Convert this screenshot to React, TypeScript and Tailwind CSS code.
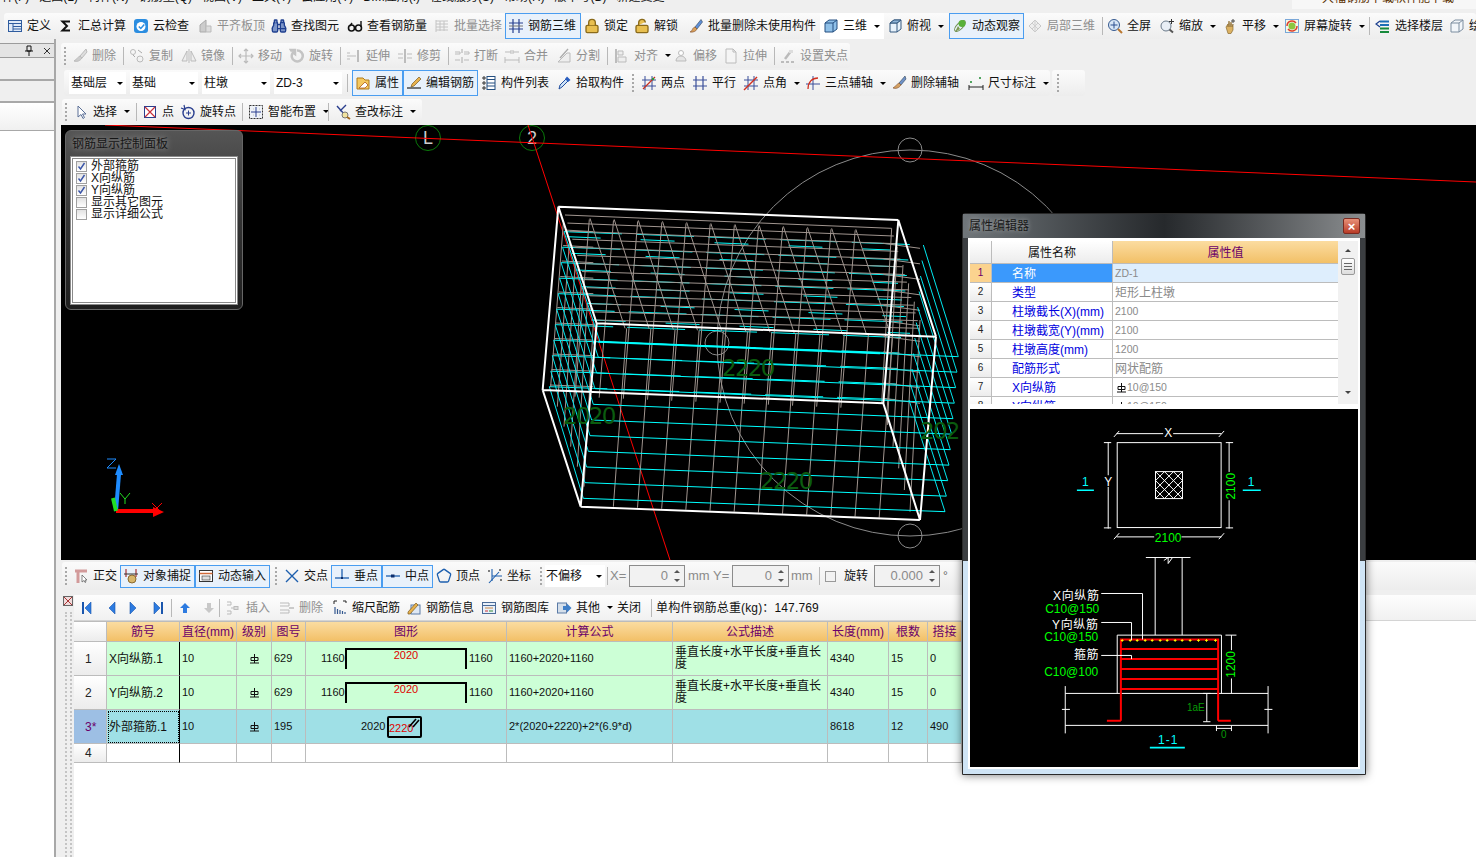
import type { ReactNode } from 'react';
import { Lock, LockOpen, Binoculars, Pentagon } from 'lucide-react';

const line = (d: string, c = '#888', w = 1) => <path d={d} fill="none" stroke={c} strokeWidth={w} />;

// toolbar pictures, all on a 16x16 box
const icons: Record<string, ReactNode> = {
  def: <><rect x="1.5" y="2.5" width="13" height="11" fill="#dfeaf8" stroke="#2f5c9f" />{line('M1.5 5.5h13M6 5.5v8M6 8.5h8.5M6 11h8.5', '#2f5c9f')}</>,
  sigma: line('M12 3.5H4.5L9 8l-4.5 4.5H12', '#111', 2),
  cloud: <><rect x="1" y="1" width="14" height="14" rx="3" fill="#2b8de0" /><circle cx="8" cy="8.5" r="4.5" fill="#fff" />{line('M5.8 8.5l2 2 3.5-4', '#2b8de0', 1.5)}</>,
  flat: <><path d="M3 14V7l6-5v12z" fill="#ccc" stroke="#aaa" /><path d="M9 14V8h5v6z" fill="#ddd" stroke="#bbb" /></>,
  glass: <><circle cx="4.5" cy="10" r="3" fill="none" stroke="#111" strokeWidth="1.6" /><circle cx="11.5" cy="10" r="3" fill="none" stroke="#111" strokeWidth="1.6" />{line('M7.5 10h1M14 9V3M3 8l2-3', '#111', 1.4)}</>,
  batch: <>{line('M2 2v12M2 3h12M2 6h12M2 9h12M2 12h12M6 3v10M10 3v10', '#c4c4c4')}</>,
  bars: <>{line('M1 5h14M1 11h14M5 1v14M11 1v14', '#27408f', 1.2)}{line('M1 8h14', '#777')}</>,
  brush: <><path d="M13 1.5L7 9l2 2 5.5-7z" fill="#5f8fd8" stroke="#345" strokeWidth=".6" /><path d="M7 9c-2 .5-2.5 2-3 3.5L2 14c3 .5 6-.5 7-3z" fill="#d9a05a" stroke="#7a4a2a" strokeWidth=".6" /></>,
  cube: <><path d="M2 5l4-3h8v9l-4 3H2z" fill="#8fc0e8" stroke="#244f80" /><path d="M2 5h8v9M10 5l4-3" fill="none" stroke="#244f80" /></>,
  cubeTop: <><path d="M3 5l4-3h7v9l-4 3H3z" fill="#e8f2fb" stroke="#35597f" /><path d="M3 5h7v9M10 5l4-3" fill="none" stroke="#35597f" /><path d="M3 5h7l4-3H7z" fill="#8fb5d8" stroke="#35597f" /></>,
  orbit: <><ellipse cx="8" cy="8" rx="7" ry="3" transform="rotate(-45 8 8)" fill="none" stroke="#6f8f4f" /><circle cx="10" cy="5.5" r="3.5" fill="#58b13a" /><path d="M6 8l-3 6 5-3z" fill="#7c9a50" /></>,
  part: <><path d="M2 8l6-6 6 6-6 6z" fill="#eee" stroke="#c8c8c8" />{line('M5 5l6 6M11 5l-6 6M8 2v12', '#cfcfcf')}</>,
  full: <><circle cx="7" cy="7" r="5.5" fill="#d8e6f6" stroke="#35598f" />{line('M7 3.5v7M3.5 7h7', '#2a4f8f')}{line('M11 11l4 4', '#b9772f', 2)}</>,
  zoom: <><circle cx="7" cy="8" r="5" fill="#e8eef5" stroke="#6a7a8a" />{line('M10.5 11.5l3.5 3', '#555', 2)}{line('M12.5 1v5M10 3.5h5', '#333')}</>,
  pan: <><path d="M4 9l2-3v3l1-6 1 6 1-5 1 5 1-3v6l-2 3.5H6z" fill="#dcb263" stroke="#8a6a30" strokeWidth=".7" />{line('M11 1v4M9 3h4', '#444')}</>,
  spin: <><rect x="1.5" y="1.5" width="13" height="13" fill="#f4f9e8" stroke="#7aa7d8" /><circle cx="8" cy="8" r="3.5" fill="#8cc63f" />{line('M3 8a5 5 0 0 1 9-3M13 8a5 5 0 0 1-9 3', '#e0402a', 1.5)}</>,
  floor: <>{line('M5 3.5h9M5 7h9', '#1b6fb5', 2)}{line('M5 10.5h9M5 14h9', '#178a3c', 2)}{line('M5 3L1 6l4 3', '#1b3f8f', 1.2)}</>,
  boxLine: <><path d="M2 5l4-3h8v9l-4 3H2zM2 5h8v9M10 5l4-3" fill="#f2f6fa" stroke="#7d8ea0" /></>,
  erase: <><path d="M14 1L8 8l2 2 5-6z" fill="#ddd" stroke="#bbb" /><path d="M8 8c-2 1-3 3-6 5 3 1 6 0 8-3z" fill="#ccc" stroke="#bbb" /></>,
  copy: <><circle cx="4" cy="4" r="2.5" fill="none" stroke="#bbb" /><circle cx="11" cy="11" r="3" fill="none" stroke="#bbb" />{line('M4 7l2 2M9 2l4 3', '#aaa')}</>,
  mirror: <>{line('M8 1v14', '#bbb')}<path d="M6 3v10H1zM10 3v10h5z" fill="#eee" stroke="#bbb" /></>,
  move: line('M8 1v14M1 8h14M6 3l2-2 2 2M6 13l2 2 2-2M3 6L1 8l2 2M13 6l2 2-2 2', '#bbb', 1.2),
  rotate: <path d="M8 2.5a5.5 5.5 0 1 1-4 2L6 6V2H2l1 1.5" fill="none" stroke="#c4c4c4" strokeWidth="2.5" />,
  extend: <>{line('M1 5h3M1 8h9M1 11h3', '#bbb')}{line('M12 2v12', '#aaa', 1.5)}</>,
  trim: <>{line('M1 6h5M10 6h5M1 10h5M10 10h5', '#bbb')}{line('M8 1v14', '#aaa', 1.5)}</>,
  cut: <>{line('M1 4h5v2H1M10 4h5v2h-5M1 12h5M10 12h5', '#bbb')}{line('M8 1v4M8 9v6', '#aaa')}</>,
  merge: line('M1 4h6M9 4h6M1 12h14M7 2v4M9 2v4M1 9v6M15 9v6', '#bbb'),
  split: <><path d="M2 14l9-9h3v9z" fill="#eee" stroke="#bbb" />{line('M12 1L4 10', '#aaa', 1.3)}</>,
  align: <>{line('M2 1v14', '#aaa', 1.5)}<path d="M4 3h5v4H4zM4 9h8v5H4z" fill="#eee" stroke="#bbb" /></>,
  offset: <><path d="M3 13a5 5 0 1 1 10 0z" fill="#e5e5e5" stroke="#bbb" /><circle cx="8" cy="5" r="2.5" fill="#fff" stroke="#bbb" /></>,
  stretch: <><path d="M3 1h7l3 3v11H3z" fill="#f5f5f5" stroke="#bbb" />{line('M10 1v3h3', '#bbb')}</>,
  grip: <>{line('M11 3l-6 8', '#bbb', 2.5)}{line('M1 14h3M6 14h3M11 14h3', '#aaa', 1.5)}<rect x="9" y="2" width="4" height="3" fill="#ddd" /></>,
  attr: <><path d="M2 3h6l2 2h4v9H2z" fill="#f4c85f" stroke="#b07a1a" /><path d="M4 13l6-6 3 3-3 3z" fill="#fff" stroke="#b05a1a" strokeWidth=".8" /></>,
  edit: <>{line('M1 13h14', '#222', 1.2)}<path d="M13 2L6 9l-1 3 3-1 7-7z" fill="#e8b24d" stroke="#7a5a20" strokeWidth=".7" /></>,
  list: <>{line('M2 2h2v2H2zM2 7h2v2H2zM2 12h2v2H2z', '#333')}<rect x="6" y="1.5" width="8" height="13" fill="#fff" stroke="#244f80" />{line('M6 4.5h8M6 8h8M6 11h8', '#244f80')}</>,
  pick: <><path d="M3 14l1-4 6-6 2 2-6 6z" fill="#cfe3f7" stroke="#234f9f" /><path d="M9 4l2-2.5 3.5 3.5L12 7z" fill="#2a5ec0" /></>,
  twoPt: <>{line('M4 1v14M11 1v14M1 5h14M1 11h14', '#3a4f9a')}{line('M2 14L14 2', '#c83020', 1.2)}<circle cx="12" cy="4" r="1.2" fill="#2a9a3a" /></>,
  para: line('M4 1v14M11 1v14M1 5h14M1 11h14', '#3a4f9a', 1.2),
  angle: <>{line('M5 1v14M11 1v14M1 5h14M1 11h14', '#3a4f9a')}{line('M1 15L14 2', '#d03020', 1.4)}</>,
  arc: <>{line('M8 1v14M1 9h14', '#3a4f9a')}{line('M3 14C3 7 7 3 13 3', '#d03020', 1.3)}</>,
  delAxis: <><path d="M14 1L8 8l2 2 5-6z" fill="#6f92c8" stroke="#345" strokeWidth=".6" /><path d="M8 8c-2 1-3 3-6 5 3 1 6 0 8-3z" fill="#d4a060" stroke="#7a4a2a" strokeWidth=".6" /></>,
  dim: <>{line('M1 12h14M1 10v5M15 10v5', '#222')}<circle cx="3" cy="7" r="1" fill="#1d8a2f" /><circle cx="12" cy="3" r="1" fill="#1d8a2f" /></>,
  pointer: <path d="M5 2v11l3-2.5 2 4 1.5-1-2-3.5h3.5z" fill="#fff" stroke="#5a6f96" />,
  ptBox: <><rect x="2.5" y="2.5" width="11" height="11" fill="#fff" stroke="#2a3f8f" />{line('M3 3l10 10M13 3L3 13', '#c8303a', 1.2)}</>,
  ptRot: <><circle cx="8.5" cy="9" r="5.5" fill="none" stroke="#2a3f8f" strokeWidth="1.4" />{line('M8.5 6.5v5M6 9h5', '#2a3f8f')}{line('M4 1l1 4.5L1 4', '#2a3f8f', 1.2)}</>,
  smart: <><rect x="1.5" y="1.5" width="13" height="13" fill="#eef2f7" stroke="#333" strokeDasharray="2 1" />{line('M5 5h.1M11 5h.1M5 11h.1M11 11h.1', '#111', 2)}{line('M8 3v10M3 8h10', '#2a3f8f', 1)}</>,
  note: <>{line('M2 2l8 9M11 1L5 7', '#2a3f8f', 1.4)}<circle cx="10" cy="11" r="3" fill="#f1e3a0" stroke="#777" />{line('M12 13l3 2', '#a36a1f', 2)}</>,
  ortho: <>{line('M2 3h12', '#d29a9a', 3)}{line('M5 3v12', '#d29a9a', 3)}<path d="M9 7v7l2-1.5 1 2 1-.5-1-2h2z" fill="#fff" stroke="#555" strokeWidth=".7" /></>,
  snap: <>{line('M3 1v8M13 1v8', '#a33', 1.2)}<circle cx="9" cy="11" r="4" fill="#d8b66a" stroke="#8a6a30" />{line('M1 6h14', '#333')}</>,
  dynIn: <><rect x="1.5" y="2.5" width="13" height="11" fill="#fff" stroke="#333" />{line('M1.5 5.5h13', '#d06a3a', 1.5)}<rect x="4" y="8" width="8" height="4" fill="#ddd" stroke="#333" strokeWidth=".6" /></>,
  cross: line('M2 2l12 12M14 2L2 14', '#1d5fae', 1.4),
  perp: <>{line('M8 1v8', '#1d5fae', 1.3)}{line('M1 10h14', '#1d5fae', 1.3)}<rect x="7" y="9" width="2" height="2" fill="#0d2f6e" /></>,
  mid: <>{line('M1 8h14', '#1d5fae', 1.3)}<rect x="6" y="6.5" width="3.5" height="3" fill="#0d2f6e" /></>,
  coord: <>{line('M5 1v12M5 8h10', '#1d5fae', 1.1)}{line('M2 15l10-11', '#1d5fae', 1.1)}<circle cx="2" cy="3" r="1" fill="#555" /><circle cx="13" cy="2" r="1" fill="#555" /><circle cx="14" cy="12" r="1" fill="#555" /></>,
  ins: <>{line('M1 2h4v3H1M1 11h4v3H1M5 8h3', '#bbb')}<rect x="8" y="6.5" width="4" height="3" fill="#ddd" stroke="#bbb" /></>,
  del: <>{line('M1 3h9v3H1M1 10h9v3H1', '#bbb')}{line('M10 8h5', '#bbb', 1.5)}</>,
  scale: <>{line('M2 1h3M2 1v3M11 1h3M14 1v2', '#222')}{line('M3 14v-7M5.5 14v-5M8 14v-4M10.5 14v-3M13 14v-2', '#35598f', 1.2)}</>,
  info: <><rect x="5" y="5" width="9" height="9" fill="#dfe8f4" stroke="#5a7aa6" /><path d="M2 12l8-9 2 2-8 9H2z" fill="#e8b24d" stroke="#7a5a20" strokeWidth=".7" /></>,
  lib: <><rect x="1.5" y="2.5" width="13" height="11" fill="#e8f0fa" stroke="#4a6a96" />{line('M1.5 5.5h13', '#4a6a96')}{line('M4 8h8', '#c84')}{line('M4 11h3', '#c33')}{line('M8 11h4', '#383')}</>,
  other: <><rect x="1.5" y="3" width="9" height="10" fill="#d5dfea" stroke="#5a7aa6" /><path d="M7 6h4V3.5L15.5 8 11 12.5V10H7z" fill="#3f7fc8" /></>,
};

const Pic = ({ n, size = 16 }: { n: string; size?: number }) => (
  <svg width={size} height={size} viewBox="0 0 16 16" className="shrink-0">{icons[n]}</svg>
);

const Caret = ({ cls = 'ml-[7px]' }: { cls?: string }) => (
  <span className={`${cls} w-0 h-0 shrink-0 border-x-[3px] border-x-transparent border-t-[3px] border-t-black`} />
);

const Grip = ({ w = 'w-[8px]' }: { w?: string }) => (
  <div className={`${w} h-full shrink-0 flex items-center justify-center`}>
    <div className="h-[18px] border-l-2 border-dotted border-[#a8a8a8]" />
  </div>
);

const Sep = ({ w = 'w-[5px]' }: { w?: string }) => (
  <div className={`${w} h-full shrink-0 flex items-center justify-center`}>
    <div className="h-[18px] w-px bg-[#b8b8b8]" />
  </div>
);

type ToolProps = { w: string; i?: ReactNode; n?: string; t?: string; sel?: boolean; off?: boolean; arrow?: boolean; white?: boolean };

function Tool({ w, i, n, t, sel, off, arrow, white }: ToolProps) {
  return (
    <div
      className={`${w} h-full shrink-0 flex items-center pl-[2px] border whitespace-nowrap ${
        sel ? 'border-[#4a9df0] bg-[#e8f1fb]' : white ? 'border-transparent bg-white' : 'border-transparent'
      } ${off ? 'text-[#8f8f8f]' : 'text-[#111]'}`}
    >
      {n ? <Pic n={n} /> : i}
      {t && <span className="ml-[4px]">{t}</span>}
      {arrow && <Caret />}
    </div>
  );
}

function Combo({ w, t }: { w: string; t: string }) {
  return (
    <div className={`${w} h-[22px] shrink-0 bg-white flex items-center pl-[2px] text-[#111]`}>
      <span className="flex-1">{t}</span>
      <Caret cls="mr-[1px]" />
      <span className="w-[2px]" />
    </div>
  );
}

function Spin({ w, v }: { w: string; v: string }) {
  return (
    <div className={`${w} h-[22px] shrink-0 border border-[#8c8c8c] bg-[#f2f2f2] flex items-center justify-end text-[#8a8a8a] text-[13px]`}>
      <span className="mr-[2px]">{v}</span>
      <div className="w-[14px] h-full flex flex-col items-center justify-center gap-[6px]">
        <span className="w-0 h-0 border-x-[3px] border-x-transparent border-b-[3px] border-b-[#555]" />
        <span className="w-0 h-0 border-x-[3px] border-x-transparent border-t-[3px] border-t-[#555]" />
      </div>
    </div>
  );
}

const Band = ({ cls, children }: { cls: string; children: ReactNode }) => (
  <div className={`${cls} flex rounded-[3px] bg-linear-to-b from-[#fbfbfb] to-[#ededed]`}>{children}</div>
);

// rebar grade mark used in the tables
const Grade = () => (
  <svg width="9" height="10" viewBox="0 0 9 10" className="shrink-0">
    <path d="M1 3.5h7v3H1zM4.5 0v9M0 9h9" fill="none" stroke="#111" strokeWidth="1" />
  </svg>
);

// ---- 3D view ----
const zx = (x: number) => 530 + x / 3;
const zy = (y: number) => 190 + y / 3;
const seg = (a: number, b: number, c: number, d: number) => `M${zx(a)} ${zy(b)}L${zx(c)} ${zy(d)}`;
const range = (n: number) => Array.from({ length: n }, (_, k) => k);

const greyMesh = [
  ...range(14).map((j) => seg(105 + (95 * j) / 13, 75 + (315 * j) / 13, 1085 + (85 * j) / 13, 115 + (300 * j) / 13)),
  ...range(12).map((k) => seg(180 + 72.5 * k, 85 + 3 * k, 285 + 72.5 * k, 415 + 2 * k)),
  ...range(12).map((k) => seg(178 + 72.5 * k, 88 + 3 * k, 135 + 72.5 * k, 620 + 3 * k)),
  ...range(12).map((k) => seg(290 + 72.5 * k, 415 + 2 * k, 250 + 72.5 * k, 950 + 3 * k)),
  ...range(6).map((k) => seg(100 + 18 * k, 100 + 60 * k, 62 + 20 * k, 590 + 60 * k)),
  ...range(6).map((k) => seg(1085 + 17 * k, 115 + 55 * k, 1055 + 17 * k, 640 + 65 * k)),
  ...range(11).map((k) => seg(60 + 4.4 * k, 585 - 46.5 * k, 190, 590 - 46.5 * k)),
  ...range(11).map((k) => seg(1060, 625 - 46.5 * k, 1170, 640 - 46.5 * k)),
].join('');

const cyanFront = range(11).map((k) => seg(160 + 5 * k, 925 - 47 * k, 1245 + 4 * k, 965 - 46.5 * k)).join('');
const cyanBack = range(11).map((k) => seg(58 + 4.4 * k, 590 - 46.5 * k, 1137 + 4.3 * k, 630 - 46.5 * k)).join('');
const cyanTop = range(6).map((k) => seg(110 + 15 * k, 140 + 50 * k, 1080 + 12 * k, 180 + 50 * k)).join('');
const cyanSide = [
  ...range(11).map((k) => seg(1137 + 4.3 * k, 630 - 46.5 * k, 1245 + 4 * k, 965 - 46.5 * k)),
  ...range(11).map((k) => seg(58 + 4.4 * k, 590 - 46.5 * k, 160 + 5 * k, 925 - 47 * k)),
].join('');

function Bubble({ x, y, t }: { x: number; y: number; t: string }) {
  return (
    <g>
      <circle cx={x} cy={y} r="12.5" fill="none" stroke="#0a7a0a" />
      <text x={x} y={y + 6} textAnchor="middle" fontSize="18" fill="#ccc">{t}</text>
    </g>
  );
}

function View3D() {
  return (
    <svg viewBox="61 125 1415 435" width="1415" height="435" className="block">
      <rect x="61" y="125" width="1415" height="435" fill="#000" />
      <circle cx="910" cy="343" r="193" fill="none" stroke="#8a8a8a" />
      <circle cx="910" cy="150" r="12" fill="none" stroke="#8a8a8a" />
      <circle cx="910" cy="536" r="12" fill="none" stroke="#8a8a8a" />
      <circle cx="717" cy="343" r="12" fill="none" stroke="#8a8a8a" />
      <Bubble x={428} y={138} t="L" />
      <Bubble x={532} y={138} t="2" />
      {line('M105 125L1476 182M528 125L670 560', '#ff0000')}
      <path d={cyanBack} fill="none" stroke="#00ffff" strokeDasharray="58 14" />
      <path d={cyanTop} fill="none" stroke="#00ffff" strokeDasharray="34 40" />
      <path d={greyMesh} fill="none" stroke="#a0958f" />
      <path d={cyanSide} fill="none" stroke="#00e8f0" />
      <path d={cyanFront} fill="none" stroke="#00ffff" />
      {line(seg(205, 455, 1050, 490), '#00ffff', 2)}
      <path
        d={`${seg(85, 50, 1105, 90)}${seg(1105, 90, 1218, 440)}${seg(1218, 440, 200, 400)}${seg(200, 400, 85, 50)}${seg(38, 600, 1060, 640)}${seg(1060, 640, 1170, 990)}${seg(1170, 990, 152, 950)}${seg(152, 950, 38, 600)}${seg(85, 50, 38, 600)}${seg(1105, 90, 1060, 640)}${seg(200, 400, 152, 950)}${seg(1218, 440, 1170, 990)}`}
        fill="none"
        stroke="#fff"
        strokeWidth="2"
      />
      <g fill="#0b5c0f" fontSize="23" letterSpacing="-1.7" fontFamily="'DejaVu Sans', sans-serif">
        <text x="722" y="376">2220</text>
        <text x="563" y="424">2020</text>
        <text x="760" y="489">2220</text>
        <text x="920" y="439">202</text>
      </g>
      {/* axis gizmo */}
      {line('M116 511L119 474', '#1e8cff', 4)}
      <path d="M119 464l4 11h-8z" fill="#1e8cff" />
      {line('M116 511H154', '#ff0000', 4)}
      <path d="M164 512l-11 5v-10z" fill="#ff0000" />
      {line('M116 511L113 498', '#22dd22', 4)}
      {line('M107 459h9l-9 9h9', '#1e8cff')}
      {line('M120 493l5 6 5-6M125 499v5', '#22dd22')}
      {line('M152 503l10 10M162 503l-10 10', '#ff0000')}
    </svg>
  );
}

// ---- preview in the property dialog, drawn in 3x units ----
function Preview() {
  const w = '#fff';
  const ticks = 'M462 95l16-18M777 95l16-18M462 402l16-18M777 402l16-18M432 112h22M432 368h22M798 112h22M798 368h22';
  return (
    <svg viewBox="30 12 1165 1073" width="388" height="358" className="block bg-black">
      {line('M470 85H610M640 85H785M470 395H583M665 395H785M445 110V210M445 245V370M808 110V200M808 285V370', w, 3)}
      {line(ticks, w, 3)}
      <rect x="472" y="112" width="312" height="255" fill="none" stroke={w} strokeWidth="3" />
      <rect x="587" y="199" width="81" height="81" fill="none" stroke={w} strokeWidth="3" />
      {line('M587 226l27-27M587 253l54-54M587 280l81-81M614 280l54-54M641 280l27-27M587 253l27 27M587 226l54 54M587 199l81 81M614 199l54 54M641 199l27 27', w, 3)}
      {line('M351 255h51M849 255h54M570 1028h105', '#00ffff', 5)}
      {line('M586 457V690M667 457V690M558 457H692M612 466l13-9v18l13-18', w, 3)}
      {line('M472 865V690H785V865M316 865H925M316 961H925M316 843V985M925 843V985M306 913h24M914 913h24', w, 3)}
      {line('M483 947V703H775V947M483 732H775M483 762H775M483 792H775M483 822H775M483 852H775M441 947H483M775 947H813', '#ff0000', 6)}
      {line('M487 702v8M511 702v8M532 702v8M556 702v8M577 702v8M601 702v8M622 702v8M646 702v8M667 702v8M691 702v8M716 702v8M740 702v8M767 702v8M483 706h8M507 706h8M528 706h8M552 706h8M573 706h8M597 706h8M618 706h8M642 706h8M663 706h8M687 706h8M712 706h8M736 706h8M763 706h8', '#ffff00', 3)}
      {line('M424 565H548V703M424 652H515V705M424 751H515V762', w, 3)}
      {line('M815 690V735M815 820V865M797 690H830M741 865V950M730 865H752M730 950H752M770 970H815M770 962V978M815 962V978', w, 3)}
      <g fontSize="36" textAnchor="middle" fontFamily="'Liberation Sans', 'Noto Sans CJK SC', sans-serif">
        <text x="625" y="95" fill={w}>X</text>
        <text x="445" y="243" fill={w}>Y</text>
        <text x="376" y="243" fill="#00ffff">1</text>
        <text x="874" y="243" fill="#00ffff">1</text>
        <text x="625" y="411" fill="#00ff00">2100</text>
        <text transform="translate(827 243) rotate(-90)" fill="#00ff00">2100</text>
        <text transform="translate(827 778) rotate(-90)" fill="#00ff00">1200</text>
        <text x="625" y="1016" fill="#00ffff" letterSpacing="3">1-1</text>
        <text x="792" y="999" fill="#079a07" fontSize="30">0</text>
        <text x="708" y="918" fill="#079a07" fontSize="30">1aE</text>
      </g>
      <g fontSize="36" textAnchor="end" fontFamily="'Liberation Sans', 'Noto Sans CJK SC', sans-serif">
        <text x="419" y="584" fill={w} letterSpacing="2">X向纵筋</text>
        <text x="418" y="623" fill="#00ff00">C10@150</text>
        <text x="416" y="671" fill={w} letterSpacing="2">Y向纵筋</text>
        <text x="415" y="707" fill="#00ff00">C10@150</text>
        <text x="418" y="761" fill={w} letterSpacing="2">箍筋</text>
        <text x="415" y="812" fill="#00ff00">C10@100</text>
      </g>
    </svg>
  );
}

const propRows: [string, string, ReactNode][] = [
  ['1', '名称', 'ZD-1'],
  ['2', '类型', '矩形上柱墩'],
  ['3', '柱墩截长(X)(mm)', '2100'],
  ['4', '柱墩截宽(Y)(mm)', '2100'],
  ['5', '柱墩高度(mm)', '1200'],
  ['6', '配筋形式', '网状配筋'],
  ['7', 'X向纵筋', <span className="flex items-center gap-[1px] pl-[2px]"><Grade />10@150</span>],
  ['8', 'Y向纵筋', <span className="flex items-center gap-[1px] pl-[2px]"><Grade />10@150</span>],
];

function PropEditor() {
  return (
    <div className="absolute left-[962px] top-[213px] w-[404px] h-[562px] flex flex-col border border-[#2a2a2a] rounded-t-[3px] px-[5px] shadow-[0_0_10px_rgba(0,0,0,0.55)] bg-linear-to-b from-[#3b3e41] from-[62%] to-[#cfe4f5] to-[62%]">
      <div className="h-[24px] shrink-0 -mx-[5px] pl-[6px] pr-[5px] flex items-center justify-between bg-linear-to-r from-[#70767a] via-[#26292c] to-[#8b8e90] text-[#1a1a1a] text-[12px]">
        <span className="[text-shadow:0_0_5px_rgba(255,255,255,0.45)]">属性编辑器</span>
        <div className="w-[17px] h-[16px] rounded-[2px] border border-[#7a2a20] bg-linear-to-b from-[#e89078] to-[#b83a25] flex items-center justify-center text-white text-[13px] font-bold leading-none">×</div>
      </div>
      <div className="flex-1 border-2 border-white bg-white pt-px mb-[5px] flex flex-col">
        <div className="h-[163px] flex overflow-hidden shrink-0 border-x-0">
          <div className="w-[368px]">
            <div className="h-[23px] flex text-[12px] border-b border-[#bcbcbc] pt-0">
              <div className="w-[22px] border-r border-[#bcbcbc] bg-linear-to-b from-white to-[#ececec]" />
              <div className="w-[121px] border-r border-[#bcbcbc] bg-linear-to-b from-white to-[#ececec] flex items-center justify-center pt-px text-[#111]">属性名称</div>
              <div className="flex-1 bg-linear-to-b from-[#fbdca0] to-[#f2c066] flex items-center justify-center pt-px text-[#6a006a]">属性值</div>
            </div>
            {propRows.map(([no, name, val], k) => (
              <div key={no} className="h-[19px] flex border-b border-[#bcbcbc] text-[12px] leading-none">
                <div className={`w-[22px] border-r border-[#bcbcbc] flex items-center justify-center text-[10px] ${k === 0 ? 'bg-[#fbd38f] text-[#6a006a]' : 'bg-linear-to-b from-white to-[#ececec] text-[#222]'}`}>{no}</div>
                <div className={`w-[121px] border-r border-[#bcbcbc] flex items-center pl-[20px] pt-px whitespace-nowrap text-[#0000e0] ${k === 0 ? 'bg-[#3b99fc] text-white' : 'bg-white'}`}>{name}</div>
                <div className={`flex-1 flex items-center pl-[2px] pt-px text-[#8a8a8a] ${/^[\dZ]/.test(String(val)) || k > 5 ? 'text-[10.5px]' : ''} ${k === 0 ? 'bg-[#deeefd]' : 'bg-white'}`}>{val}</div>
              </div>
            ))}
          </div>
          <div className="w-[20px] bg-[#f1f1f1] flex flex-col items-center pt-[8px]">
            <span className="w-0 h-0 border-x-[3px] border-x-transparent border-b-[3px] border-b-[#444]" />
            <div className="mt-[6px] w-[14px] h-[17px] border border-[#999] rounded-[2px] bg-linear-to-b from-white to-[#ddd] flex flex-col items-center justify-center gap-[2px]">
              <span className="w-[8px] h-px bg-[#666]" />
              <span className="w-[8px] h-px bg-[#666]" />
              <span className="w-[8px] h-px bg-[#666]" />
            </div>
            <span className="mt-[116px] w-0 h-0 border-x-[3px] border-x-transparent border-t-[3px] border-t-[#444]" />
          </div>
        </div>
        <div className="mt-[5px]">
          <Preview />
        </div>
      </div>
    </div>
  );
}

function ControlPanel() {
  const rows: [string, boolean][] = [['外部箍筋', true], ['X向纵筋', true], ['Y向纵筋', true], ['显示其它图元', false], ['显示详细公式', false]];
  return (
    <div className="absolute left-[65px] top-[130px] w-[178px] h-[180px] rounded-[6px] border border-[#666] bg-linear-to-b from-[#555] via-[#333] to-[#1f1f1f] px-[4px] flex flex-col">
      <div className="h-[25px] shrink-0 pl-[2px] flex items-center text-[12px] text-[#161616] [text-shadow:0_0_6px_rgba(255,255,255,0.5)]">钢筋显示控制面板</div>
      <div className="h-[149px] border-[3px] border-double border-[#8a8a8a] bg-white pl-[3px] pt-px">
        {rows.map(([t, on]) => (
          <div key={t} className="h-[12px] flex items-center gap-[4px] text-[12px] leading-none text-[#111]">
            <div className="w-[11px] h-[11px] border border-[#a0a0a0] bg-linear-to-b from-[#e2e2e2] to-white flex items-center justify-center">
              {on && (
                <svg width="9" height="9" viewBox="0 0 9 9">
                  <path d="M1.5 4.5l2 2.5 4-6" fill="none" stroke="#3a55a8" strokeWidth="1.4" />
                </svg>
              )}
            </div>
            {t}
          </div>
        ))}
      </div>
    </div>
  );
}

// ---- steel table ----
const cols = 'grid grid-cols-[33px_73px_57px_35px_34px_201px_166px_155px_61px_39px_34px]';
const cell = 'border-r border-b border-[#bcbcbc] flex items-center';
const heads = ['', '筋号', '直径(mm)', '级别', '图号', '图形', '计算公式', '公式描述', '长度(mm)', '根数', '搭接'];

const Bent = ({ n }: { n: string }) => (
  <div className="flex items-center pl-[15px] text-[11px] h-full">
    <span className="w-[24px]">{n}</span>
    <div className="h-[21px] w-[122px] border-t-2 border-x-2 border-black text-center text-[#e00000] leading-[11px] -mt-[1px]">2020</div>
    <span className="ml-[2px]">{n}</span>
  </div>
);

const Stirrup = () => (
  <div className="flex items-center pl-[55px] text-[11px] h-full">
    <span className="w-[26px]">2020</span>
    <div className="relative w-[35px] h-[22px] border-2 border-black rounded-[2px] text-[#e00000] pt-[5px] leading-none whitespace-nowrap">
      2220
      <svg width="12" height="10" viewBox="0 0 12 10" className="absolute right-0 top-0">
        <path d="M1 9l7-8M5 9l6-7" fill="none" stroke="#000" strokeWidth="1.6" />
      </svg>
    </div>
  </div>
);

type Row = { no: string; name: string; shape: ReactNode; formula: string; desc: string; len: string; count: string; lap: string; grid: string; h: string; head: string };

const rows: Row[] = [
  { no: '1', name: 'X向纵筋.1', shape: <Bent n="1160" />, formula: '1160+2020+1160', desc: '垂直长度+水平长度+垂直长度', len: '4340', count: '15', lap: '0', grid: 'bg-[#ccffd6]', h: 'h-[34px]', head: 'bg-linear-to-b from-white to-[#ececec] text-[#222]' },
  { no: '2', name: 'Y向纵筋.2', shape: <Bent n="1160" />, formula: '1160+2020+1160', desc: '垂直长度+水平长度+垂直长度', len: '4340', count: '15', lap: '0', grid: 'bg-[#ccffd6]', h: 'h-[34px]', head: 'bg-linear-to-b from-white to-[#ececec] text-[#222]' },
  { no: '3*', name: '外部箍筋.1', shape: <Stirrup />, formula: '2*(2020+2220)+2*(6.9*d)', desc: '', len: '8618', count: '12', lap: '490', grid: 'bg-[#9fe0e6]', h: 'h-[34px]', head: 'bg-[#9dbfe4] text-[#6a006a]' },
];

function SteelTable() {
  return (
    <div className="w-[889px] text-[12px] text-[#111] border-t border-[#bcbcbc]">
      <div className={`${cols} h-[20px] text-[#6a006a]`}>
        {heads.map((t, k) => (
          <div key={k} className={`${cell} justify-center whitespace-nowrap ${k === 0 ? 'bg-linear-to-b from-white to-[#ececec]' : 'bg-linear-to-b from-[#fbdca0] to-[#f2c066]'}`}>{t}</div>
        ))}
      </div>
      {rows.map((r) => (
        <div key={r.no} className={`${cols} ${r.h} ${r.grid}`}>
          <div className={`${cell} pl-[11px] ${r.head}`}>{r.no}</div>
          <div className={`${cell} pl-[2px] border-r-black whitespace-nowrap ${r.no === '3*' ? 'outline-1 -outline-offset-2 outline-dotted outline-black' : ''}`}>{r.name}</div>
          <div className={`${cell} pl-[2px] text-[11px]`}>10</div>
          <div className={`${cell} justify-center`}><Grade /></div>
          <div className={`${cell} pl-[2px] text-[11px]`}>{r.no === '3*' ? '195' : '629'}</div>
          <div className="border-r border-b border-[#bcbcbc]">{r.shape}</div>
          <div className={`${cell} pl-[2px] text-[11px] whitespace-nowrap`}>{r.formula}</div>
          <div className="border-r border-b border-[#bcbcbc] px-[2px] pt-[5px] leading-[11.5px] break-all">{r.desc}</div>
          <div className={`${cell} pl-[2px] text-[11px]`}>{r.len}</div>
          <div className={`${cell} pl-[2px] text-[11px]`}>{r.count}</div>
          <div className={`${cell} pl-[2px] text-[11px]`}>{r.lap}</div>
        </div>
      ))}
      <div className={`${cols} h-[19px] bg-white`}>
        {heads.map((_, k) => (
          <div key={k} className={`${cell} ${k === 0 ? 'pl-[11px] bg-linear-to-b from-white to-[#ececec] text-[#222]' : ''} ${k === 1 ? 'border-r-black' : ''}`}>{k === 0 ? '4' : ''}</div>
        ))}
      </div>
    </div>
  );
}

const NavTri = ({ dir, bar }: { dir: 'l' | 'r'; bar?: boolean }) => (
  <svg width="12" height="14" viewBox="0 0 12 14" className="shrink-0">
    {dir === 'l' ? <path d="M10 1v12L4 7z" fill="#2d7be0" stroke="#1a56ad" strokeWidth=".6" /> : <path d="M2 1v12l6-6z" fill="#2d7be0" stroke="#1a56ad" strokeWidth=".6" />}
    {bar && (dir === 'l' ? <rect x="1" y="1" width="2" height="12" fill="#1a56ad" /> : <rect x="9" y="1" width="2" height="12" fill="#1a56ad" />)}
  </svg>
);

const UpDown = ({ up, off }: { up?: boolean; off?: boolean }) => (
  <svg width="12" height="12" viewBox="0 0 12 12" className="shrink-0">
    <path d={up ? 'M6 1l5 5H8v5H4V6H1z' : 'M6 11l5-5H8V1H4v5H1z'} fill={off ? '#c8c8c8' : '#2d7be0'} />
  </svg>
);

export default function App() {
  return (
    <div className="relative w-[1476px] h-[857px] overflow-hidden bg-[#efefef] font-['Liberation_Sans','Noto_Sans_CJK_SC',sans-serif] text-[12px]">
      {/* clipped menu bar */}
      <div className="h-[13px] overflow-hidden flex justify-between">
        <div className="-mt-[9px] pl-[2px] whitespace-nowrap text-[#111] leading-[12px]">
          件(F)&nbsp;&nbsp;&nbsp;选图(L)&nbsp;&nbsp;&nbsp;构件(N)&nbsp;&nbsp;&nbsp;钢筋量(Q)&nbsp;&nbsp;&nbsp;视图(V)&nbsp;&nbsp;&nbsp;工具(T)&nbsp;&nbsp;&nbsp;云应用(Y)&nbsp;&nbsp;&nbsp;BIM应用(I)&nbsp;&nbsp;&nbsp;在线服务(S)&nbsp;&nbsp;&nbsp;帮助(H)&nbsp;&nbsp;&nbsp;版本号(B)&nbsp;&nbsp;&nbsp;新建变更
        </div>
        <div className="w-[184px] h-[9px] overflow-hidden bg-[#f7f7f7] pl-[30px]">
          <div className="-mt-[8px] whitespace-nowrap text-[#5a3000] leading-[12px]">大幅钢筋下载软件能下载</div>
        </div>
      </div>

      {/* main toolbar */}
      <Band cls="h-[26px] ml-[4px] w-[1472px]">
        <Tool w="w-[51px]" n="def" t="定义" />
        <Tool w="w-[75px]" n="sigma" t="汇总计算" />
        <Tool w="w-[64px]" n="cloud" t="云检查" />
        <Tool w="w-[74px]" n="flat" t="平齐板顶" off />
        <Tool w="w-[76px]" i={<Binoculars size={16} color="#1f3f8f" fill="#7c95c8" />} t="查找图元" />
        <Tool w="w-[87px]" n="glass" t="查看钢筋量" />
        <Tool w="w-[74px]" n="batch" t="批量选择" off />
        <Tool w="w-[76px]" n="bars" t="钢筋三维" sel />
        <Tool w="w-[50px]" i={<Lock size={16} color="#8a6a1a" fill="#e8bf50" />} t="锁定" />
        <Tool w="w-[54px]" i={<LockOpen size={16} color="#8a6a1a" fill="#e8bf50" />} t="解锁" />
        <Tool w="w-[135px]" n="brush" t="批量删除未使用构件" />
        <Tool w="w-[64px]" n="cube" t="三维" arrow white />
        <Tool w="w-[65px]" n="cubeTop" t="俯视" arrow />
        <Tool w="w-[75px]" n="orbit" t="动态观察" sel />
        <Tool w="w-[76px]" n="part" t="局部三维" off />
        <Sep w="w-[4px]" />
        <Tool w="w-[52px]" n="full" t="全屏" />
        <Tool w="w-[63px]" n="zoom" t="缩放" arrow />
        <Tool w="w-[62px]" n="pan" t="平移" arrow />
        <Tool w="w-[85px]" n="spin" t="屏幕旋转" arrow />
        <Sep w="w-[6px]" />
        <Tool w="w-[74px]" n="floor" t="选择楼层" />
        <Tool w="w-[40px]" n="boxLine" t="绘" />
      </Band>

      <div className="flex">
        {/* docked side panel */}
        <div className="w-[56px] h-[818px] shrink-0 pt-[4px] border-r-2 border-[#a8a8a8] flex flex-col">
          <div className="h-[15px] shrink-0 flex items-center justify-end gap-[9px] pr-[3px] bg-[#e4e4e4] border-y border-[#9c9c9c]">
            <svg width="10" height="11" viewBox="0 0 10 11">
              <path d="M3 1h4v5H3zM1 6h8M5 6v5" fill="none" stroke="#111" />
            </svg>
            <svg width="8" height="8" viewBox="0 0 8 8">
              <path d="M1 1l6 6M7 1L1 7" fill="none" stroke="#333" />
            </svg>
          </div>
          <div className="h-[23px] shrink-0 border-b-2 border-[#a8a8a8]" />
          <div className="h-[22px] shrink-0 border-b-2 border-[#a8a8a8]" />
          <div className="h-[28px] shrink-0 border-b border-[#a8a8a8] bg-linear-to-b from-white to-[#f0f0f0]" />
          <div className="flex-1 bg-white" />
        </div>

        <div className="flex-1 min-w-0 pl-[5px]">
          {/* edit toolbar */}
          <Band cls="mt-[4px] h-[25px] w-[789px]">
            <Grip />
            <Tool w="w-[52px]" n="erase" t="删除" off />
            <Sep />
            <Tool w="w-[52px]" n="copy" t="复制" off />
            <Tool w="w-[52px]" n="mirror" t="镜像" off />
            <Sep />
            <Tool w="w-[51px]" n="move" t="移动" off />
            <Tool w="w-[52px]" n="rotate" t="旋转" off />
            <Sep />
            <Tool w="w-[51px]" n="extend" t="延伸" off />
            <Tool w="w-[51px]" n="trim" t="修剪" off />
            <Sep w="w-[6px]" />
            <Tool w="w-[50px]" n="cut" t="打断" off />
            <Tool w="w-[52px]" n="merge" t="合并" off />
            <Tool w="w-[51px]" n="split" t="分割" off />
            <Sep w="w-[7px]" />
            <Tool w="w-[59px]" n="align" t="对齐" off arrow />
            <Tool w="w-[50px]" n="offset" t="偏移" off />
            <Tool w="w-[51px]" n="stretch" t="拉伸" off />
            <Sep w="w-[6px]" />
            <Tool w="w-[74px]" n="grip" t="设置夹点" off />
          </Band>

          {/* component toolbar */}
          <div className="mt-[2px] h-[26px] flex">
            <Band cls="ml-[3px] w-[986px] pl-[5px] items-center">
              <div className="h-full flex items-center gap-[4px]">
                <Combo w="w-[57px]" t="基础层" />
                <Combo w="w-[68px]" t="基础" />
                <Combo w="w-[68px]" t="柱墩" />
                <Combo w="w-[68px]" t="ZD-3" />
              </div>
              <Sep w="w-[10px]" />
              <Tool w="w-[51px]" n="attr" t="属性" sel />
              <Tool w="w-[75px]" n="edit" t="编辑钢筋" sel />
              <Tool w="w-[75px]" n="list" t="构件列表" />
              <Tool w="w-[75px]" n="pick" t="拾取构件" />
              <Grip w="w-[10px]" />
              <Tool w="w-[51px]" n="twoPt" t="两点" />
              <Tool w="w-[51px]" n="para" t="平行" />
              <Tool w="w-[62px]" n="angle" t="点角" arrow />
              <Tool w="w-[86px]" n="arc" t="三点辅轴" arrow />
              <Tool w="w-[77px]" n="delAxis" t="删除辅轴" />
              <Tool w="w-[85px]" n="dim" t="尺寸标注" arrow />
            </Band>
            <Band cls="ml-[2px] w-[33px] pl-[2px]">
              <Grip w="w-[8px]" />
            </Band>
          </div>

          {/* point toolbar */}
          <Band cls="mt-[3px] ml-[1px] h-[25px] w-[360px]">
            <Grip />
            <Tool w="w-[63px]" n="pointer" t="选择" arrow />
            <Sep w="w-[6px]" />
            <Tool w="w-[38px]" n="ptBox" t="点" />
            <Tool w="w-[62px]" n="ptRot" t="旋转点" />
            <Sep w="w-[6px]" />
            <Tool w="w-[80px]" n="smart" t="智能布置" arrow />
            <Sep w="w-[7px]" />
            <Tool w="w-[87px]" n="note" t="查改标注" arrow />
          </Band>

          <div className="mt-px">
            <View3D />
          </div>

          {/* snap toolbar */}
          <Band cls="mt-[2px] ml-[1px] h-[28px] w-[1414px] items-center">
            <Grip />
            <div className="h-[23px] flex">
              <Tool w="w-[50px]" n="ortho" t="正交" />
              <Tool w="w-[75px]" n="snap" t="对象捕捉" sel />
              <Tool w="w-[75px]" n="dynIn" t="动态输入" sel />
              <Grip w="w-[11px]" />
              <Tool w="w-[50px]" n="cross" t="交点" />
              <Tool w="w-[51px]" n="perp" t="垂点" sel />
              <Tool w="w-[51px]" n="mid" t="中点" sel />
              <Tool w="w-[51px]" i={<Pentagon size={16} color="#1d5fae" />} t="顶点" />
              <Tool w="w-[52px]" n="coord" t="坐标" />
              <Grip w="w-[9px]" />
            </div>
            <div className="w-[60px] h-[22px] bg-white flex items-center pl-[1px] text-[#111]">
              <span className="flex-1">不偏移</span>
              <Caret cls="mr-[3px]" />
            </div>
            <Sep w="w-[4px]" />
            <span className="w-[20px] text-[#8a8a8a] text-[13px] pl-px">X=</span>
            <Spin w="w-[56px]" v="0" />
            <span className="w-[47px] text-[#8a8a8a] text-[13px] pl-[3px] whitespace-nowrap">mm Y=</span>
            <Spin w="w-[57px]" v="0" />
            <span className="w-[28px] text-[#8a8a8a] text-[13px] pl-[2px]">mm</span>
            <Sep w="w-[5px]" />
            <div className="ml-[3px] w-[11px] h-[11px] border border-[#999] bg-[#f2f2f2]" />
            <span className="ml-[8px] w-[30px] text-[#111]">旋转</span>
            <Spin w="w-[66px]" v="0.000" />
            <span className="ml-[3px] text-[#666]">°</span>
          </Band>

          <div className="mt-[5px] ml-[1px] flex">
            {/* grip strip */}
            <div className="w-[12px] h-[262px] shrink-0 flex flex-col items-center">
              <svg width="10" height="10" viewBox="0 0 10 10" className="mt-[1px]">
                <rect x=".5" y=".5" width="9" height="9" fill="#f0dcdc" stroke="#666" />
                <path d="M1 1l8 8M9 1L1 9" stroke="#a33" />
              </svg>
              <div className="mt-[6px] flex-1 w-[7px] border-x-2 border-dotted border-[#c4c4c4]" />
            </div>
            <div className="flex-1 min-w-0 bg-white">
              <div className="h-[26px] flex items-center border-b border-[#d4d4d4] bg-linear-to-b from-[#fdfdfd] to-[#f1f1f1]">
                <div className="w-[7px]" />
                <NavTri dir="l" bar />
                <div className="w-[12px]" />
                <NavTri dir="l" />
                <div className="w-[11px]" />
                <NavTri dir="r" />
                <div className="w-[12px]" />
                <NavTri dir="r" bar />
                <Sep w="w-[15px]" />
                <UpDown up />
                <div className="w-[12px]" />
                <UpDown off />
                <Sep w="w-[8px]" />
                <div className="h-full flex">
                  <Tool w="w-[53px]" n="ins" t="插入" off />
                  <Tool w="w-[53px]" n="del" t="删除" off />
                  <Tool w="w-[74px]" n="scale" t="缩尺配筋" />
                  <Tool w="w-[75px]" n="info" t="钢筋信息" />
                  <Tool w="w-[75px]" n="lib" t="钢筋图库" />
                  <Tool w="w-[61px]" n="other" t="其他" arrow />
                  <div className="w-[35px] flex items-center pl-[3px] text-[#111]">关闭</div>
                </div>
                <Sep w="w-[4px]" />
                <span className="ml-[3px] text-[#111] whitespace-nowrap text-[12px] tracking-[0.15px]">单构件钢筋总重(kg)：147.769</span>
              </div>
              <SteelTable />
            </div>
          </div>
        </div>
      </div>

      <ControlPanel />
      <PropEditor />
    </div>
  );
}
